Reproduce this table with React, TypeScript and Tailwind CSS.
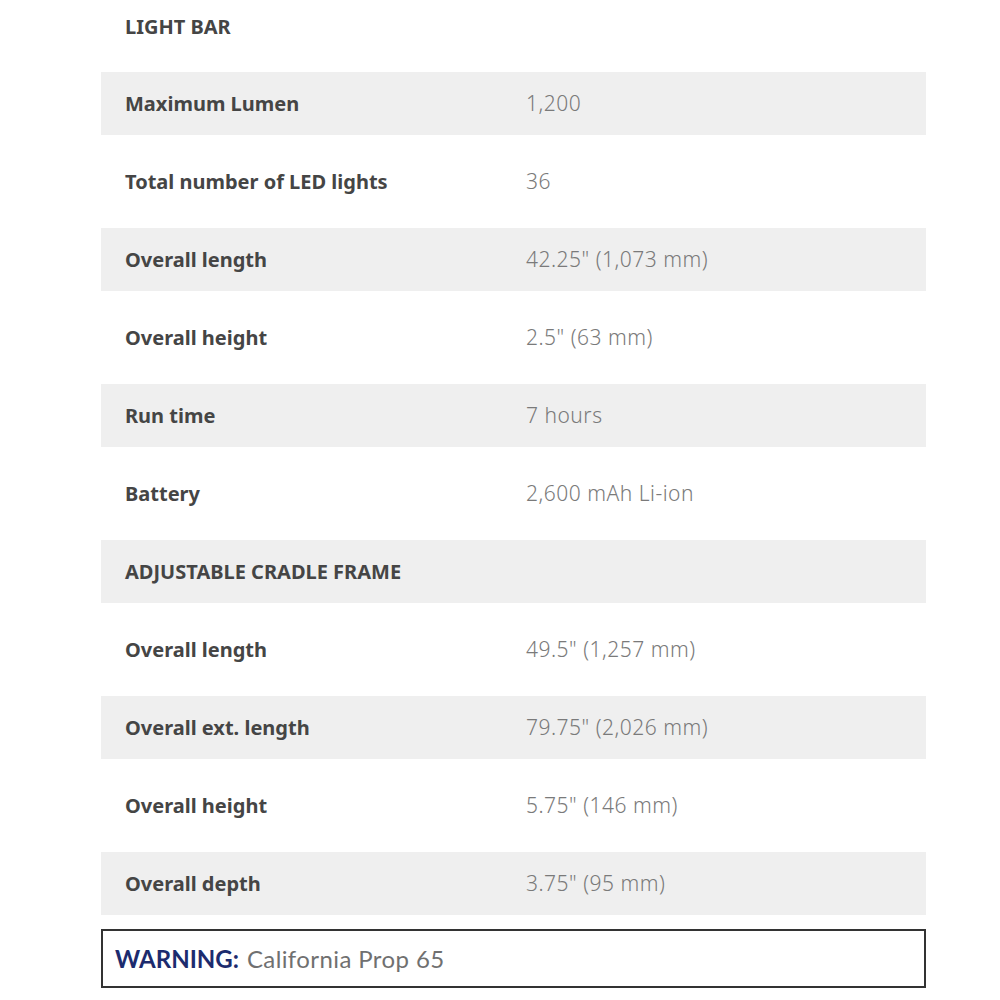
const ROWS: { label: string; value?: string; section?: boolean }[] = [
  { label: "LIGHT BAR", section: true },
  { label: "Maximum Lumen", value: "1,200" },
  { label: "Total number of LED lights", value: "36" },
  { label: "Overall length", value: '42.25" (1,073 mm)' },
  { label: "Overall height", value: '2.5" (63 mm)' },
  { label: "Run time", value: "7 hours" },
  { label: "Battery", value: "2,600 mAh Li-ion" },
  { label: "ADJUSTABLE CRADLE FRAME", section: true },
  { label: "Overall length", value: '49.5" (1,257 mm)' },
  { label: "Overall ext. length", value: '79.75" (2,026 mm)' },
  { label: "Overall height", value: '5.75" (146 mm)' },
  { label: "Overall depth", value: '3.75" (95 mm)' },
];

export default function App() {
  return (
    <div className="min-h-screen bg-white font-['Noto_Sans',sans-serif]">
      <div className="ml-[101px] w-[825px]">
        {/* first header row is cut off at the top */}
        <div className="h-[72px] pt-[13px] pl-6 text-[20px] leading-7 font-bold text-[#454545]">
          LIGHT BAR
        </div>
        {ROWS.slice(1).map((row, i) => {
          const gray = i % 2 === 0;
          return (
            <div
              key={i}
              className={`grid grid-cols-[401px_1fr] items-center pl-6 ${
                gray ? "h-[63px] bg-[#efefef]" : "h-[93px]"
              }`}
            >
              <span className="text-[20px] font-bold text-[#454545]">{row.label}</span>
              <span className="text-[21px] font-light tracking-[0.5px] text-[#7a7a7a]">{row.value}</span>
            </div>
          );
        })}
        <div className="mt-[14px] flex h-[59px] items-center border-2 border-[#333] pl-3 font-['Lato',sans-serif] text-[24px]">
          <span className="font-bold text-[#1c2b6e]">WARNING:</span>
          <span className="ml-2 tracking-[0.4px] text-[#707070]">California Prop 65</span>
        </div>
      </div>
    </div>
  );
}
